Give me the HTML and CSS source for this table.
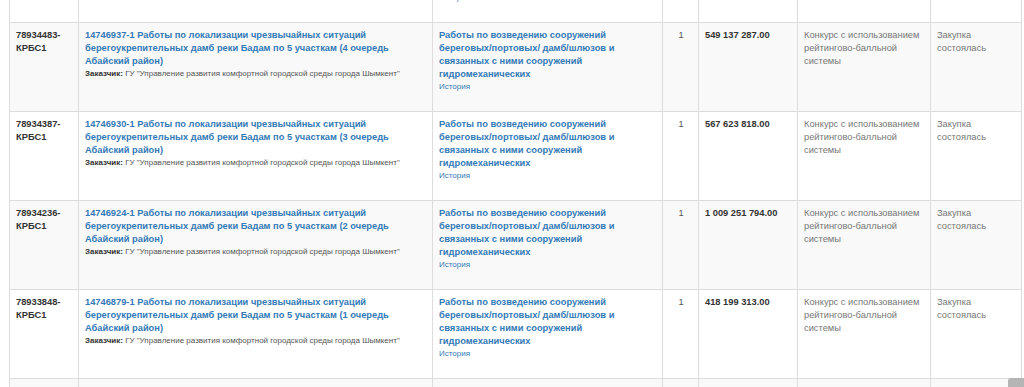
FILE: index.html
```html
<!DOCTYPE html>
<html lang="ru">
<head>
<meta charset="utf-8">
<title>Закупки</title>
<link rel="stylesheet" href="styles.css">
</head>
<body>
<div class="viewport">
  <table class="lots">
    <colgroup>
      <col class="c-id"><col class="c-name"><col class="c-type"><col class="c-qty"><col class="c-sum"><col class="c-method"><col class="c-status">
    </colgroup>
    <tbody>
      <tr class="row row-top">
        <td class="id">78934490-<br>КРБС1</td>
        <td><a class="title" href="#">14746940-1 Работы по локализации чрезвычайных ситуаций берегоукрепительных дамб реки Бадам по 5 участкам (5 очередь Абайский район) и прилегающих территорий</a>
          <div class="cust"><b>Заказчик:</b> ГУ "Акимат города"</div></td>
        <td><a class="title" href="#">Работы по возведению сооружений береговых/портовых/ дамб/шлюзов и связанных с ними сооружений гидромеханических</a>
          <a class="hist" href="#">История</a></td>
        <td class="qty">1</td>
        <td class="sum">549 137 287.00</td>
        <td class="muted">Конкурс с использованием рейтингово-балльной системы</td>
        <td class="muted">Закупка</td>
      </tr>
      <tr class="row odd">
        <td class="id">78934483-<br>КРБС1</td>
        <td><a class="title" href="#">14746937-1 Работы по локализации чрезвычайных ситуаций берегоукрепительных дамб реки Бадам по 5 участкам (4 очередь Абайский район)</a>
          <div class="cust"><b>Заказчик:</b> ГУ "Управление развития комфортной городской среды города Шымкент"</div></td>
        <td><a class="title" href="#">Работы по возведению сооружений береговых/портовых/ дамб/шлюзов и связанных с ними сооружений гидромеханических</a>
          <a class="hist" href="#">История</a></td>
        <td class="qty">1</td>
        <td class="sum">549 137 287.00</td>
        <td class="muted">Конкурс с использованием рейтингово-балльной системы</td>
        <td class="muted">Закупка состоялась</td>
      </tr>
      <tr class="row">
        <td class="id">78934387-<br>КРБС1</td>
        <td><a class="title" href="#">14746930-1 Работы по локализации чрезвычайных ситуаций берегоукрепительных дамб реки Бадам по 5 участкам (3 очередь Абайский район)</a>
          <div class="cust"><b>Заказчик:</b> ГУ "Управление развития комфортной городской среды города Шымкент"</div></td>
        <td><a class="title" href="#">Работы по возведению сооружений береговых/портовых/ дамб/шлюзов и связанных с ними сооружений гидромеханических</a>
          <a class="hist" href="#">История</a></td>
        <td class="qty">1</td>
        <td class="sum">567 623 818.00</td>
        <td class="muted">Конкурс с использованием рейтингово-балльной системы</td>
        <td class="muted">Закупка состоялась</td>
      </tr>
      <tr class="row odd">
        <td class="id">78934236-<br>КРБС1</td>
        <td><a class="title" href="#">14746924-1 Работы по локализации чрезвычайных ситуаций берегоукрепительных дамб реки Бадам по 5 участкам (2 очередь Абайский район)</a>
          <div class="cust"><b>Заказчик:</b> ГУ "Управление развития комфортной городской среды города Шымкент"</div></td>
        <td><a class="title" href="#">Работы по возведению сооружений береговых/портовых/ дамб/шлюзов и связанных с ними сооружений гидромеханических</a>
          <a class="hist" href="#">История</a></td>
        <td class="qty">1</td>
        <td class="sum">1 009 251 794.00</td>
        <td class="muted">Конкурс с использованием рейтингово-балльной системы</td>
        <td class="muted">Закупка состоялась</td>
      </tr>
      <tr class="row">
        <td class="id">78933848-<br>КРБС1</td>
        <td><a class="title" href="#">14746879-1 Работы по локализации чрезвычайных ситуаций берегоукрепительных дамб реки Бадам по 5 участкам (1 очередь Абайский район)</a>
          <div class="cust"><b>Заказчик:</b> ГУ "Управление развития комфортной городской среды города Шымкент"</div></td>
        <td><a class="title" href="#">Работы по возведению сооружений береговых/портовых/ дамб/шлюзов и связанных с ними сооружений гидромеханических</a>
          <a class="hist" href="#">История</a></td>
        <td class="qty">1</td>
        <td class="sum">418 199 313.00</td>
        <td class="muted">Конкурс с использованием рейтингово-балльной системы</td>
        <td class="muted">Закупка состоялась</td>
      </tr>
      <tr class="row odd">
        <td class="id">78933822-<br>КРБС1</td>
        <td><a class="title" href="#">14746864-1 Капитальный ремонт берегоукрепительных сооружений</a>
          <div class="cust"><b>Заказчик:</b> ГУ "Управление"</div></td>
        <td><a class="title" href="#">Работы по возведению сооружений</a></td>
        <td class="qty">1</td>
        <td class="sum">10 777 151 313.00</td>
        <td class="muted">Конкурс</td>
        <td class="muted">Закупка</td>
      </tr>
    </tbody>
  </table>
  <span class="totop"></span>
</div>
</body>
</html>
```

FILE: styles.css
```css
html, body {
  margin: 0;
  padding: 0;
  background: #fff;
}
body {
  font-family: "Liberation Sans", Arial, Helvetica, sans-serif;
  font-size: 9.3px;
  line-height: 13.2px;
  color: #333;
}
.viewport {
  position: relative;
  height: 387px;
  overflow: hidden;
  padding-left: 9px;
}
.lots {
  border-collapse: collapse;
  table-layout: fixed;
  width: 1013px;
  margin-top: -67px;
  border-left: 1px solid #ddd;
  border-right: 1px solid #ddd;
}
.c-id { width: 69px; }
.c-name { width: 354px; }
.c-type { width: 230px; }
.c-qty { width: 36px; }
.c-sum { width: 99px; }
.c-method { width: 133px; }
.c-status { width: 91px; }

.row td {
  height: 89px;
  box-sizing: border-box;
  vertical-align: top;
  padding: 6px 5px 5px 6px;
  border: 1px solid #ddd;
  border-top: 0;
}
.row.odd td { background: #f9f9f9; }

.id {
  font-weight: bold;
  color: #333;
}
.title {
  display: block;
  color: #337ab7;
  font-weight: bold;
  text-decoration: none;
}
.cust {
  font-size: 8px;
  line-height: 12px;
  color: #555;
}
.cust b { color: #333; }
.hist {
  display: block;
  font-size: 8px;
  line-height: 12px;
  color: #337ab7;
  text-decoration: none;
}
.qty {
  text-align: center;
  color: #555;
}
.sum {
  font-weight: bold;
  color: #333;
}
.muted {
  color: #777;
}
.totop {
  position: absolute;
  right: 0;
  bottom: 0;
  width: 16px;
  height: 9px;
  background: #b5b5b5;
  border-radius: 3px 0 0 0;
}
```
